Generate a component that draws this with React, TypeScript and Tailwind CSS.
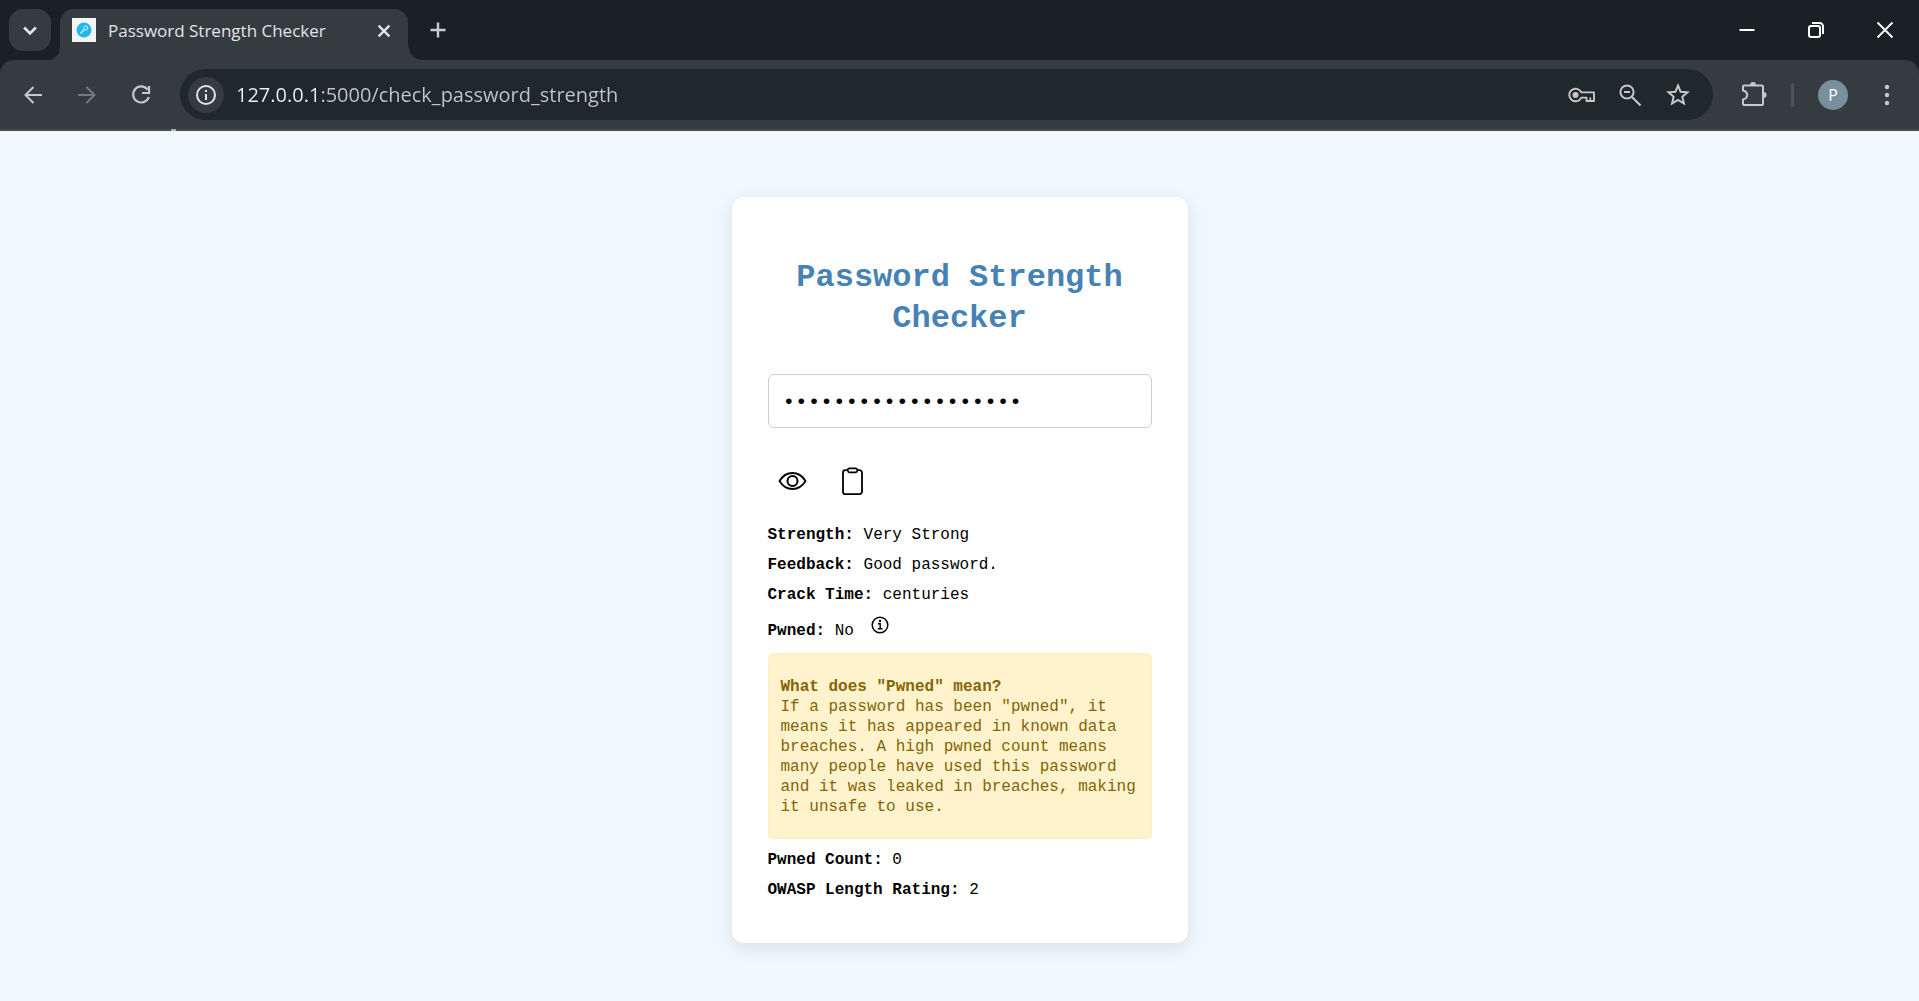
import React from "react";

type IconProps = { size?: number; box?: number; children?: React.ReactNode; className?: string };

function Icon({ size = 24, box = 24, children, className = "" }: IconProps) {
  return (
    <svg width={size} height={size} viewBox={`0 0 ${box} ${box}`} fill="none" stroke="currentColor" strokeWidth={2} className={"shrink-0 " + className} aria-hidden="true">
      {children}
    </svg>
  );
}

function TabStrip() {
  return (
    <div className="flex h-[60px] items-end bg-[#1a2124]">
      <button aria-label="Search tabs" className="mb-[9px] ml-[9px] flex size-[42px] items-center justify-center rounded-[14px] bg-[#353c3f] text-[#e3e3e3]">
        <Icon size={20}><path d="M5 9l7 7 7-7" strokeWidth={3.2} /></Icon>
      </button>
      <svg width="9" height="12" viewBox="0 0 9 12" className="shrink-0" aria-hidden="true">
        <path d="M9 0Q8 12 -6 12H9z" fill="#353c3f" />
      </svg>
      <div className="flex h-[51px] w-[348px] items-center rounded-t-[14px] bg-[#353c3f] pr-3 pb-2 pl-3">
        <svg width="24" height="24" viewBox="0 0 24 24" className="mb-[2px] shrink-0" aria-hidden="true">
          <rect width="24" height="24" fill="#f4f4f4" />
          <circle cx="12" cy="12" r="7.5" fill="#22b7ee" />
          <circle cx="13.8" cy="10" r="2" fill="none" stroke="#d8f2fc" />
          <path d="M12.3 11.5L8.5 15.5" stroke="#d8f2fc" strokeWidth="1.2" />
        </svg>
        <span className="ml-3 grow truncate font-['Open_Sans','Noto_Sans',sans-serif] text-[17px] leading-6 text-[#e3e3e3]">Password Strength Checker</span>
        <button aria-label="Close tab" className="flex size-6 items-center justify-center text-[#e3e3e3]">
          <Icon size={20}><path d="M5.5 5.5l13 13M18.5 5.5l-13 13" strokeWidth={2.8} /></Icon>
        </button>
      </div>
      <svg width="16" height="16" viewBox="0 0 16 16" className="shrink-0" aria-hidden="true">
        <path d="M0 0Q1 16 16 16H0z" fill="#353c3f" />
      </svg>
      <button aria-label="New tab" className="mb-[18px] ml-[2px] flex size-6 items-center justify-center text-[#c9cdcf]">
        <Icon><path d="M12 4.500v15M4.500 12h15" strokeWidth={2.4} /></Icon>
      </button>
      <div className="ml-auto flex h-full items-center text-white">
        <button aria-label="Minimize" className="flex h-[58px] w-[69px] items-center justify-center">
          <Icon><path d="M4.5 12h15" /></Icon>
        </button>
        <button aria-label="Restore" className="flex h-[58px] w-[69px] items-center justify-center">
          <Icon><rect x="5" y="8" width="11" height="11" rx="2" /><path d="M8 5h7.500A3.500 3.500 0 0 1 19 8.500V16" /></Icon>
        </button>
        <button aria-label="Close window" className="flex h-[58px] w-[69px] items-center justify-center">
          <Icon><path d="M4.5 4.5l15 15M19.5 4.5l-15 15" strokeWidth={1.8} /></Icon>
        </button>
      </div>
    </div>
  );
}

function AddressBar() {
  return (
    <div className="ml-[27px] flex h-[51px] grow items-center rounded-full bg-[#1f282b] pr-[21px] pl-2">
      <button aria-label="View site information" className="flex size-9 shrink-0 items-center justify-center rounded-full bg-[#353c3f] text-[#e3e3e3]">
        <Icon><circle cx="12" cy="12" r="9" /><path d="M12 11v6M12 7v2" /></Icon>
      </button>
      <input
        aria-label="Address"
        defaultValue="127.0.0.1:5000/check_password_strength"
        className="ml-3 h-8 min-w-0 grow bg-[linear-gradient(90deg,#f0f2f2_84px,#c4c7c8_84px)] bg-clip-text font-['Open_Sans','Noto_Sans',sans-serif] text-[20px] leading-8 text-transparent outline-none"
      />
      <div className="flex items-center gap-5 text-[#c7c7c7]">
        <button aria-label="Manage passwords">
          <Icon size={28} box={28}>
            <path d="M13.300 11.400A6.300 6.300 0 1 0 13.300 16.600H18.500V20H26V11.400z" strokeWidth={1.900} strokeLinejoin="round" />
            <path d="M22.300 20v-3.500" strokeWidth={1.700} />
            <circle cx="7.500" cy="14" r="3" fill="currentColor" stroke="none" />
          </Icon>
        </button>
        <button aria-label="Zoom">
          <Icon size={28} box={28}>
            <circle cx="11" cy="11" r="6.600" />
            <path d="M16 16l8.500 8.500M8 11h6" />
          </Icon>
        </button>
        <button aria-label="Bookmark this tab">
          <Icon size={28} box={28}>
            <path d="M14 4.500l2.600 6.200 6.900.6-5.200 4.500 1.600 6.700L14 19l-5.900 3.500 1.600-6.700-5.200-4.500 6.900-.6z" />
          </Icon>
        </button>
      </div>
    </div>
  );
}

function Toolbar() {
  return (
    <div className="bg-[#1a2124]">
      <div className="flex h-[69px] items-center rounded-t-[14px] bg-[#353c3f] text-[#c4c9cb]">
        <button aria-label="Back" className="ml-[21px] shrink-0"><Icon><path d="M21 12H4.500M12.500 4L4.500 12l8 8" /></Icon></button>
        <button aria-label="Forward" className="ml-[30px] shrink-0 text-[#73797c]"><Icon><path d="M3 12h16.500M11.500 4l8 8-8 8" /></Icon></button>
        <button aria-label="Reload" className="ml-[30px] shrink-0"><Icon><path d="M18.500 6.500A8 8 0 1 0 19.800 14M20 3v7h-7" strokeWidth={2.2} /></Icon></button>
        <AddressBar />
        <button aria-label="Extensions" className="ml-[26px] shrink-0">
          <Icon size={28} box={28}>
            <path d="M4 5.500Q4 4.500 5 4.500H23Q24 4.500 24 5.500V23Q24 24 23 24H5Q4 24 4 23V18.500Q8.200 17.300 8.200 14T4 9.500z" />
            <path d="M11 4a3 3 0 0 1 6 0zM24.500 11a3 3 0 0 1 0 6z" fill="currentColor" stroke="none" />
          </Icon>
        </button>
        <div className="ml-6 h-6 w-[3px] rounded bg-[#4d5457]" />
        <button aria-label="Profile" className="ml-6 flex size-[30px] shrink-0 items-center justify-center rounded-full bg-[#78909c] font-['Open_Sans',sans-serif] text-[16px] text-white">P</button>
        <button aria-label="Menu" className="mr-5 ml-[27px] shrink-0">
          <Icon><g fill="currentColor" stroke="none"><circle cx="12" cy="4" r="2.200" /><circle cx="12" cy="12" r="2.200" /><circle cx="12" cy="20" r="2.200" /></g></Icon>
        </button>
      </div>
      <div className="h-[2px] bg-[#484a4b] pl-[171px]"><div className="h-full w-[5px] bg-[#a9b4b8]" /></div>
    </div>
  );
}

function Row({ label, value }: { label: string; value: string }) {
  return <p className="leading-5"><strong>{label}:</strong> {value}</p>;
}

export default function App() {
  return (
    <div className="flex min-h-screen flex-col bg-[#f0f8ff]">
      <header><TabStrip /><Toolbar /></header>
      <main className="flex grow items-start justify-center px-4 pt-[66px] pb-[56px]">
        <section className="w-full max-w-[456px] rounded-xl bg-white px-9 pt-[60px] pb-[43px] font-['Liberation_Mono',monospace] text-[16px] text-black shadow-[0_5px_18px_rgba(0,0,0,0.1)]">
          <h1 className="text-center text-[32px] leading-[41px] font-bold text-[#4682b4]">Password Strength Checker</h1>
          <input aria-label="Password" type="password" defaultValue="CorrectHorseBattery" className="mt-[35px] block h-[54px] w-full rounded-[6px] border border-[#ccc] px-[14px] pt-[2px] text-[21px] outline-none" />
          <div className="mt-[37px] flex gap-7 px-2">
            <button aria-label="Show password">
              <Icon size={32} box={32}>
                <path d="M3.500 16C7 10.200 11 8 16.500 8S26 10.200 29.500 16C26 21.800 22 24 16.500 24S7 21.800 3.500 16z" strokeWidth={1.8} strokeLinejoin="round" />
                <circle cx="16.500" cy="16" r="5" />
              </Icon>
            </button>
            <button aria-label="Copy password">
              <Icon size={32} box={32}>
                <path d="M12 5.200H9.500A2.500 2.500 0 0 0 7 7.700V26.700A2.500 2.500 0 0 0 9.500 29.200H23.500A2.500 2.500 0 0 0 26 26.700V7.700A2.500 2.500 0 0 0 23.500 5.200H21" strokeWidth={1.8} />
                <rect x="11.800" y="3.400" width="9.400" height="4" rx="1.600" strokeWidth={1.600} />
              </Icon>
            </button>
          </div>
          <div className="mt-7 flex flex-col gap-[10px]">
            <Row label="Strength" value="Very Strong" />
            <Row label="Feedback" value="Good password." />
            <Row label="Crack Time" value="centuries" />
            <div className="flex h-[26px] items-end gap-4">
              <Row label="Pwned" value="No" />
              <button aria-label="About pwned passwords" className="flex h-[26px] items-start">
                <Icon size={20} box={20}>
                  <circle cx="10" cy="10" r="7.800" strokeWidth={1.500} />
                  <path d="M8 8.700h2.200v5M7.800 13.800h4.700" strokeWidth={1.400} />
                  <circle cx="10" cy="6" r="1.200" fill="currentColor" stroke="none" />
                </Icon>
              </button>
            </div>
          </div>
          <div className="mt-3 rounded-[6px] border border-[#ffeeba] bg-[#fff3cd] px-3 pt-[23px] pb-[21px] leading-5 text-[#856404]">
            <strong className="block">What does "Pwned" mean?</strong>
            If a password has been "pwned", it means it has appeared in known data breaches. A high pwned count means many people have used this password and it was leaked in breaches, making it unsafe to use.
          </div>
          <div className="mt-[11px] flex flex-col gap-[10px]">
            <Row label="Pwned Count" value="0" />
            <Row label="OWASP Length Rating" value="2" />
          </div>
        </section>
      </main>
    </div>
  );
}
